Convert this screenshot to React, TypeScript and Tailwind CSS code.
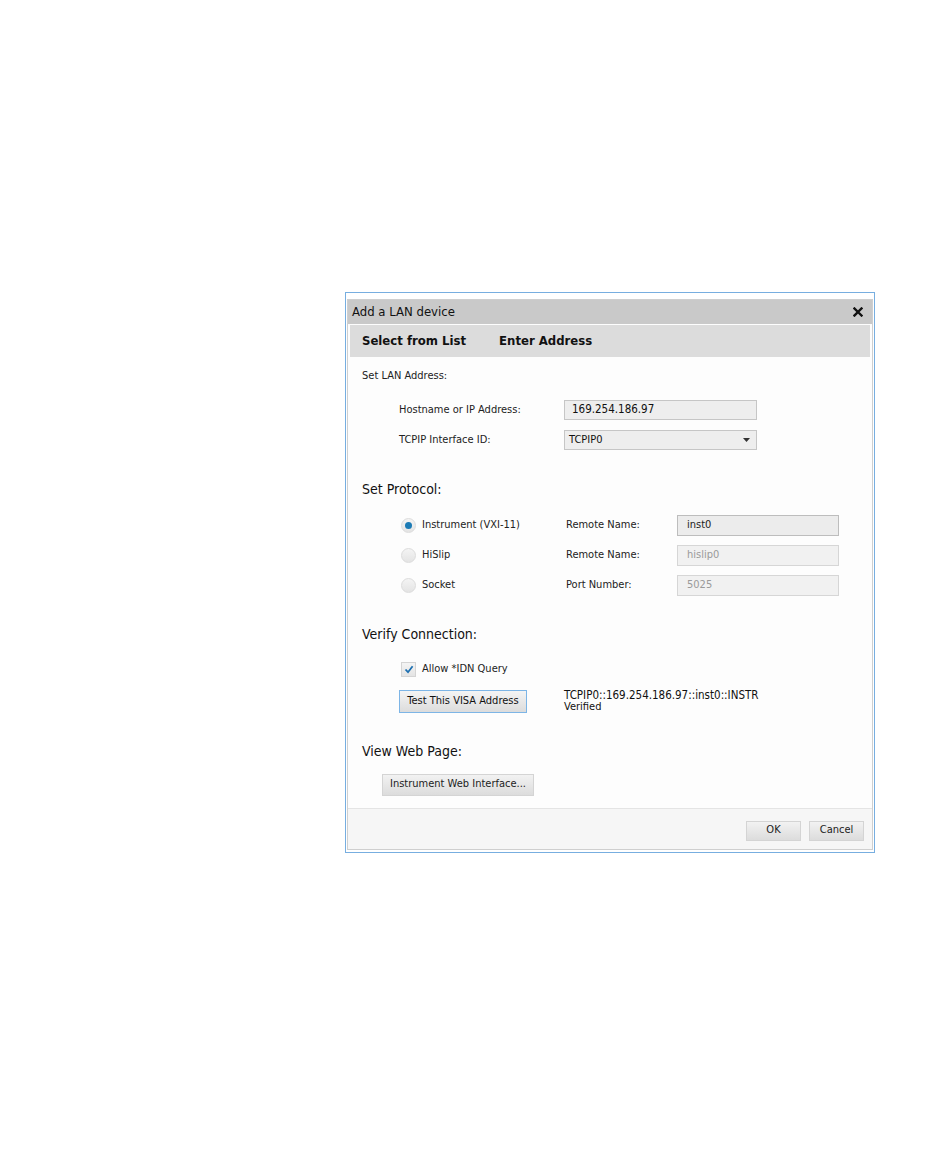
import React from "react";

const font = { fontFamily: "Tahoma, 'DejaVu Sans Condensed', 'Liberation Sans', sans-serif" };

function Radio({ checked }: { checked?: boolean }) {
  return (
    <span className="flex h-[15px] w-[15px] items-center justify-center rounded-full border border-[#dcdcdc] bg-gradient-to-b from-[#f4f4f4] to-[#e4e4e4]">
      {checked && <span className="h-[7px] w-[7px] rounded-full bg-[#1c7bb5]" />}
    </span>
  );
}

function Field({ value, strong }: { value: string; strong?: boolean }) {
  return (
    <div
      className={
        "flex h-[21px] w-[162px] items-center border px-[9px] text-[11px] " +
        (strong
          ? "border-[#bdbdbd] bg-[#ececec] text-[#222]"
          : "border-[#d6d6d6] bg-[#f1f1f1] text-[#9a9a9a]")
      }
    >
      {value}
    </div>
  );
}

export default function App() {
  return (
    <div className="min-h-[1172px] w-[950px] bg-white" style={font}>
      <div className="pl-[345px] pt-[292px]">
        <div className="w-[530px] border border-[#77aee0] bg-white px-[1px] pb-[2px] pt-[6px]">
          <div className="border border-[#cfcfcf] bg-[#fdfdfd]">
            {/* title */}
            <div className="flex h-[24px] items-center justify-between bg-[#c9c9c9] pl-[4px] pr-[9px] text-[13px] text-[#111]">
              <span>Add a LAN device</span>
              <svg width="10" height="10" viewBox="0 0 10 10">
                <path d="M1.5 1.5 L8.5 8.5 M8.5 1.5 L1.5 8.5" stroke="#111" strokeWidth="2.4" strokeLinecap="square" />
              </svg>
            </div>
            {/* tabs */}
            <div className="mx-[2px] mt-[1px] flex h-[32px] items-center bg-[#dcdcdc] pl-[12px] text-[13px] font-bold text-[#111]">
              <span>Select from List</span>
              <span className="ml-[33px]">Enter Address</span>
            </div>
            {/* body */}
            <div className="pb-[12px] pl-[14px] pr-[12px] pt-[12px] text-[11px] text-[#222]">
              <div className="leading-[14px]">Set LAN Address:</div>
              <div className="mt-[17px] grid grid-cols-[165px_193px] gap-y-[10px] pl-[37px]">
                <div className="flex h-[20px] items-center">Hostname or IP Address:</div>
                <div className="flex h-[20px] items-center border border-[#c6c6c6] bg-[#eeeeee] px-[7px] text-[11.5px] text-[#111]">
                  169.254.186.97
                </div>
                <div className="flex h-[20px] items-center">TCPIP Interface ID:</div>
                <div className="flex h-[20px] items-center justify-between border border-[#c6c6c6] bg-[#eeeeee] pl-[4px] pr-[6px] text-[#111]">
                  <span>TCPIP0</span>
                  <svg width="7" height="4" viewBox="0 0 7 4">
                    <path d="M0 0 L7 0 L3.5 4 Z" fill="#333" />
                  </svg>
                </div>
              </div>

              <div className="mt-[31px] text-[14px] leading-[17px] text-[#111]">Set Protocol:</div>
              <div className="mt-[17px] flex flex-col gap-[9px] pl-[39px]">
                {[
                  { l: "Instrument (VXI-11)", r: "Remote Name:", v: "inst0", c: true },
                  { l: "HiSlip", r: "Remote Name:", v: "hislip0", c: false },
                  { l: "Socket", r: "Port Number:", v: "5025", c: false },
                ].map((row) => (
                  <div key={row.l} className="flex h-[21px] items-center">
                    <Radio checked={row.c} />
                    <span className="ml-[6px] w-[144px]">{row.l}</span>
                    <span className="w-[111px]">{row.r}</span>
                    <Field value={row.v} strong={row.c} />
                  </div>
                ))}
              </div>

              <div className="mt-[30px] text-[14px] leading-[17px] text-[#111]">Verify Connection:</div>
              <div className="mt-[18px] flex items-center pl-[39px]">
                <span className="flex h-[15px] w-[15px] items-center justify-center border border-[#d4d4d4] bg-gradient-to-b from-[#f4f4f4] to-[#e4e4e4]">
                  <svg width="10" height="9" viewBox="0 0 10 9">
                    <path d="M1.5 4.5 L4 7.2 L8.6 1.2" stroke="#1c6fb0" strokeWidth="1.8" fill="none" />
                  </svg>
                </span>
                <span className="ml-[6px]">Allow *IDN Query</span>
              </div>
              <div className="mt-[12px] flex items-start pl-[37px]">
                <button className="h-[23px] w-[128px] border border-[#7db5e6] bg-gradient-to-b from-[#f4f4f4] to-[#dcdcdc] text-[11px] text-[#111]">
                  Test This VISA Address
                </button>
                <div className="ml-[37px] text-[11px] leading-[11px] text-[#111]">
                  <div className="text-[11.5px]">TCPIP0::169.254.186.97::inst0::INSTR</div>
                  <div>Verified</div>
                </div>
              </div>

              <div className="mt-[30px] text-[14px] leading-[17px] text-[#111]">View Web Page:</div>
              <div className="mt-[14px] pl-[20px]">
                <button className="h-[22px] w-[152px] border border-[#d4d4d4] bg-gradient-to-b from-[#f2f2f2] to-[#dcdcdc] text-[11px] text-[#222]">
                  Instrument Web Interface...
                </button>
              </div>
            </div>
            {/* footer */}
            <div className="flex h-[41px] items-start justify-end gap-[8px] border-t border-[#e4e4e4] bg-[#f6f6f6] pr-[8px] pt-[12px]">
              <button className="h-[20px] w-[55px] border border-[#d4d4d4] bg-gradient-to-b from-[#f2f2f2] to-[#dcdcdc] text-[11px] text-[#222]">
                OK
              </button>
              <button className="h-[20px] w-[55px] border border-[#d4d4d4] bg-gradient-to-b from-[#f2f2f2] to-[#dcdcdc] text-[11px] text-[#222]">
                Cancel
              </button>
            </div>
          </div>
        </div>
      </div>
    </div>
  );
}
